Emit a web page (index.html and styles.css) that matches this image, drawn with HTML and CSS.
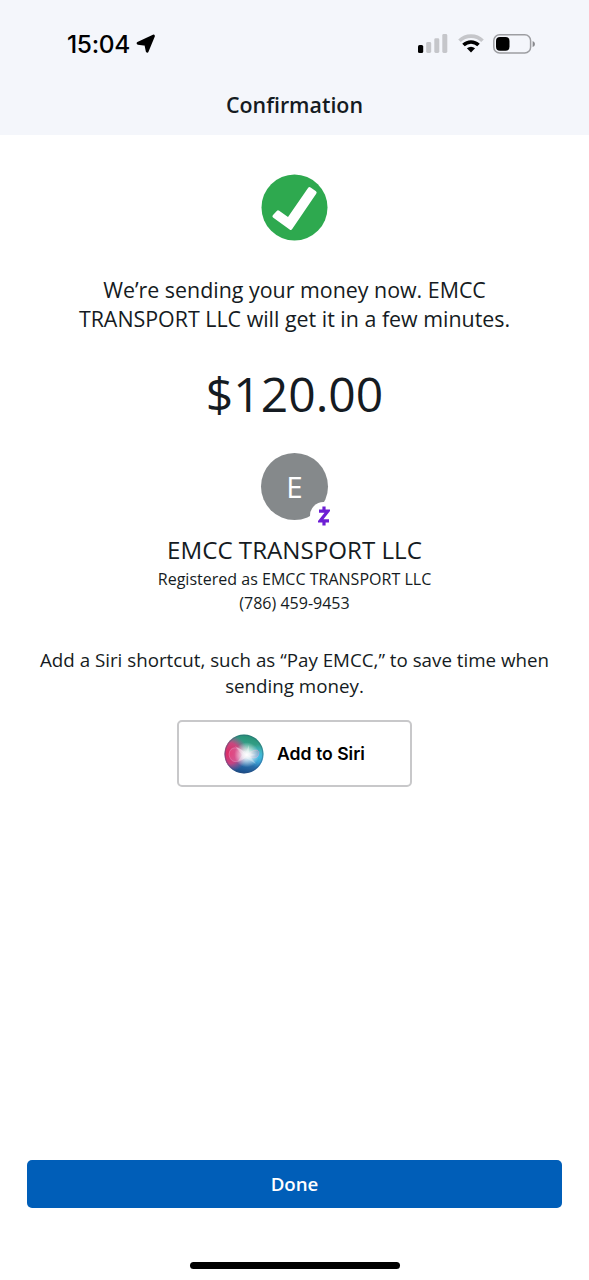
FILE: index.html
```html
<!DOCTYPE html>
<html lang="en">
<head>
<meta charset="utf-8">
<meta name="viewport" content="width=device-width, initial-scale=1">
<title>Confirmation</title>
<link rel="stylesheet" href="styles.css">
</head>
<body>
<div class="screen">
  <header class="header">
    <div class="status">
      <div class="status-left">
        <span class="time">15:04</span>
        <svg class="location" width="20" height="20" viewBox="0 0 20 20"><path d="M2 9.3 17.5 2 11.2 17.2 9.8 10.4Z" stroke="#000" stroke-width="2.8" stroke-linejoin="round"/></svg>
      </div>
      <div class="status-right">
        <svg width="30" height="20" viewBox="0 0 30 20"><rect x="0" y="11" width="5.2" height="8" rx="1.6"/><g fill="#c5c6ca"><rect x="8.2" y="8" width="5" height="11" rx="1.4"/><rect x="16.3" y="4.3" width="5" height="14.7" rx="1.4"/><rect x="24.3" y="0" width="5" height="19" rx="1.4"/></g></svg>
        <svg width="26" height="20" viewBox="0 0 26 20"><g fill="none" stroke-width="3.7"><path d="M1.5 6.7Q6.2 2.1 13 2.1T24.5 6.7" stroke="#c5c6ca"/><path d="M5.5 11Q8.7 8 13 8t7.5 3" stroke="#000"/></g><path d="M8.9 14.3Q13 11.3 17.1 14.3L13 18.6Z"/></svg>
        <svg width="43" height="20" viewBox="0 0 43 20"><rect x=".8" y=".8" width="36.8" height="18.2" rx="5.8" fill="none" stroke="#9d9ea2" stroke-width="1.5"/><rect x="3" y="3" width="13.5" height="13.7" rx="4"/><path d="M39.6 6.9Q42 7.7 42 10t-2.4 3.1Z" fill="#88898d"/></svg>
      </div>
    </div>
    <h1 class="title">Confirmation</h1>
  </header>
  <main class="content">
    <svg class="check" width="67" height="67" viewBox="0 0 67 67"><circle cx="33.5" cy="33.5" r="33" fill="#2ea94f"/><path d="M11.8 41.2 16 36.7Q17 35.8 18.2 36.8L27 43.1 47.2 13.8Q48.2 12.4 49.6 13.4L55 17.2Q56.3 18.2 55.2 19.7L31.2 55.1Q30.1 56.7 28.6 55.5L12 43.4Q10.9 42.4 11.8 41.2Z" fill="#fff"/></svg>
    <p class="message">We’re sending your money now. EMCC<br>TRANSPORT LLC will get it in a few minutes.</p>
    <p class="amount">$120.00</p>
    <div class="avatar">E
      <span class="badge"><svg width="12" height="20" viewBox="0 0 12 20"><path d="M1 5.2H9.8L2.2 14.8H11M6 .5V5.2M6 14.8V19.5" fill="none" stroke="#6d1ed4" stroke-width="3.2"/></svg></span>
    </div>
    <h2 class="name">EMCC TRANSPORT LLC</h2>
    <p class="detail registered">Registered as EMCC TRANSPORT LLC</p>
    <p class="detail phone">(786) 459-9453</p>
    <p class="hint">Add a Siri shortcut, such as “Pay EMCC,” to save time when<br>sending money.</p>
    <button class="siri">
      <svg width="40" height="40" viewBox="0 0 40 40">
        <defs>
          <linearGradient id="base" x1=".65" y1="0" x2=".45" y2="1"><stop offset="0" stop-color="#249073"/><stop offset=".42" stop-color="#3fa995"/><stop offset=".62" stop-color="#3487c2"/><stop offset="1" stop-color="#184986"/></linearGradient>
          <radialGradient id="pink" cx=".12" cy=".48" r=".48"><stop offset="0" stop-color="#df2862"/><stop offset=".55" stop-color="#d83d7d" stop-opacity=".9"/><stop offset="1" stop-color="#b04a90" stop-opacity="0"/></radialGradient>
          <radialGradient id="cyan" cx=".87" cy=".55" r=".3"><stop offset="0" stop-color="#42bee8"/><stop offset="1" stop-color="#42bee8" stop-opacity="0"/></radialGradient>
          <radialGradient id="glow" cx=".57" cy=".52" r=".32"><stop offset="0" stop-color="#fff"/><stop offset=".32" stop-color="#fff" stop-opacity=".8"/><stop offset="1" stop-color="#fff" stop-opacity="0"/></radialGradient>
        </defs>
        <circle cx="20" cy="20" r="19.5" fill="url(#base)"/><circle cx="20" cy="20" r="19.5" fill="url(#pink)"/><circle cx="20" cy="20" r="19.5" fill="url(#cyan)"/>
        <path d="M5 20C6 12 14 12 20 19C25 24 34 27 35 19C35 14 28 16 23 21C17 29 6 31 5 20Z" fill="#ee83ba" fill-opacity=".3" stroke="#e8a6cf" stroke-opacity=".5" stroke-width=".8"/>
        <circle cx="20" cy="20" r="19.5" fill="url(#glow)"/><path d="M11 12 22 18 25 11 25 19 32 21 26 22 32 30 22 24 14 27 18 21Z" fill="#fff" opacity=".3"/>
        <circle cx="20" cy="20" r="18.8" fill="none" stroke="#315077" stroke-opacity=".4" stroke-width="1"/>
      </svg>
      <span>Add to Siri</span>
    </button>
  </main>
  <footer class="footer">
    <button class="done">Done</button>
    <div class="home"></div>
  </footer>
</div>
</body>
</html>
```
FILE: styles.css
```css
* { box-sizing: border-box; }
body { margin: 0; background: #fff; color: #151b22; font-family: "Open Sans", sans-serif; }
h1, h2, p { margin: 0; font-weight: 400; white-space: nowrap; }
button { font: inherit; padding: 0; }
svg { display: block; flex: none; }
.screen { height: 1280px; display: flex; flex-direction: column; }
.header { height: 135px; background: #f4f6fb; flex: none; }
.status { height: 87px; padding: 0 53px 0 67px; display: flex; align-items: center; justify-content: space-between; }
.status-left { display: flex; align-items: center; gap: 6px; }
.time { font: 500 24.5px/30px Inter, sans-serif; color: #000; letter-spacing: -.3px; }
.status-right { display: flex; align-items: center; gap: 9.5px; }
.title { font-size: 21.4px; font-weight: 600; line-height: 36px; text-align: center; }
.content { flex: 1; padding-top: 39px; display: flex; flex-direction: column; align-items: center; text-align: center; }
.message { margin-top: 34px; font-size: 21.4px; line-height: 29px; }
.amount { margin-top: 31px; font-size: 48px; line-height: 60px; }
.avatar { position: relative; margin-top: 29px; width: 67px; height: 67px; border-radius: 50%; background: #85898b; color: #fff; font-size: 29.5px; line-height: 67px; }
.badge { position: absolute; left: 49px; top: 49px; width: 27px; height: 27px; border-radius: 50%; background: #fff; display: flex; align-items: center; justify-content: center; }
.name { margin-top: 15px; font-size: 24.15px; line-height: 30px; }
.detail { font-size: 16.05px; line-height: 24px; }
.registered { margin-top: 2px; }
.hint { margin-top: 32px; font-size: 18.75px; line-height: 26px; }
.siri { margin-top: 21px; width: 235px; height: 67px; border: 2px solid #c8c8ca; border-radius: 5px; background: #fff; display: flex; align-items: center; justify-content: center; gap: 13px; color: #000; font: 600 17.6px/24px Inter, sans-serif; }
.footer { padding: 0 27px 11px; display: flex; flex-direction: column; align-items: center; }
.done { width: 100%; height: 48px; border: 0; border-radius: 5px; background: #005eb8; color: #fff; font-size: 18.7px; font-weight: 600; padding-bottom: 2px; }
.home { margin-top: 54px; width: 210px; height: 7px; border-radius: 4px; background: #000; }
```
